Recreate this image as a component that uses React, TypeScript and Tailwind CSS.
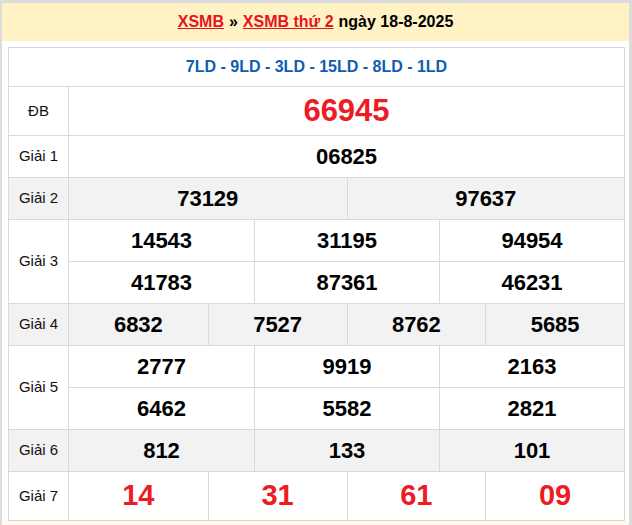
import React from 'react';

const font = { fontFamily: '"Liberation Sans", Arial, sans-serif' };

type Row = {
  label: string;
  cols: number;
  values: string[][]; // sub-rows
  gray?: boolean;
  kind?: 'db' | 'g7';
};

const rows: Row[] = [
  { label: 'ĐB', cols: 1, values: [['66945']], kind: 'db' },
  { label: 'Giải 1', cols: 1, values: [['06825']] },
  { label: 'Giải 2', cols: 2, values: [['73129', '97637']], gray: true },
  { label: 'Giải 3', cols: 3, values: [['14543', '31195', '94954'], ['41783', '87361', '46231']] },
  { label: 'Giải 4', cols: 4, values: [['6832', '7527', '8762', '5685']], gray: true },
  { label: 'Giải 5', cols: 3, values: [['2777', '9919', '2163'], ['6462', '5582', '2821']] },
  { label: 'Giải 6', cols: 3, values: [['812', '133', '101']], gray: true },
  { label: 'Giải 7', cols: 4, values: [['14', '31', '61', '09']], kind: 'g7' },
];

const gridCols: Record<number, string> = {
  1: 'grid-cols-1',
  2: 'grid-cols-2',
  3: 'grid-cols-3',
  4: 'grid-cols-4',
};

function PrizeRow({ row }: { row: Row }) {
  const tall = row.kind ? 'h-[48px]' : 'h-[41px]';
  const numClass =
    row.kind === 'db'
      ? 'text-[31px] text-[#ed1c24]'
      : row.kind === 'g7'
        ? 'text-[29px] text-[#ed1c24]'
        : 'text-[22px] text-black';

  return (
    <div className={`flex border-t border-[#d9d9d9] ${row.gray ? 'bg-[#f2f2f2]' : 'bg-white'}`}>
      <div className="w-[60px] shrink-0 flex items-center justify-center border-r border-[#d9d9d9] text-[15px] text-[#111]">
        {row.label}
      </div>
      <div className="flex-1 flex flex-col">
        {row.values.map((sub, i) => (
          <div
            key={i}
            className={`grid ${gridCols[row.cols]} ${i > 0 ? 'border-t border-[#d9d9d9]' : ''}`}
          >
            {sub.map((v, j) => (
              <div
                key={j}
                className={`${tall} flex items-center justify-center font-bold ${numClass} ${
                  j > 0 ? 'border-l border-[#d9d9d9]' : ''
                }`}
              >
                {v}
              </div>
            ))}
          </div>
        ))}
      </div>
    </div>
  );
}

export default function App() {
  return (
    <div className="w-[632px] h-[525px] overflow-hidden bg-[#dcdcdc] pt-[3px] pl-[2px] pr-[3px]" style={font}>
      <div className="h-full bg-[#fffaeb] flex flex-col">
        <div className="h-[38px] shrink-0 bg-[#fff2c4] flex items-center justify-center text-[16px] font-bold text-black">
          <span className="text-[#e8141c] underline">XSMB</span>
          <span className="mx-[5px]">»</span>
          <span className="text-[#e8141c] underline">XSMB thứ 2</span>
          <span className="ml-[5px]">ngày 18-8-2025</span>
        </div>
        <div className="bg-white pt-[6px] pl-[6px] pr-[4px]">
          <div className="border border-[#d9d9d9]">
            <div className="h-[38px] flex items-center justify-center text-[16px] font-bold text-[#0f5db0]">
              7LD - 9LD - 3LD - 15LD - 8LD - 1LD
            </div>
            {rows.map((r) => (
              <PrizeRow key={r.label} row={r} />
            ))}
          </div>
        </div>
      </div>
    </div>
  );
}
